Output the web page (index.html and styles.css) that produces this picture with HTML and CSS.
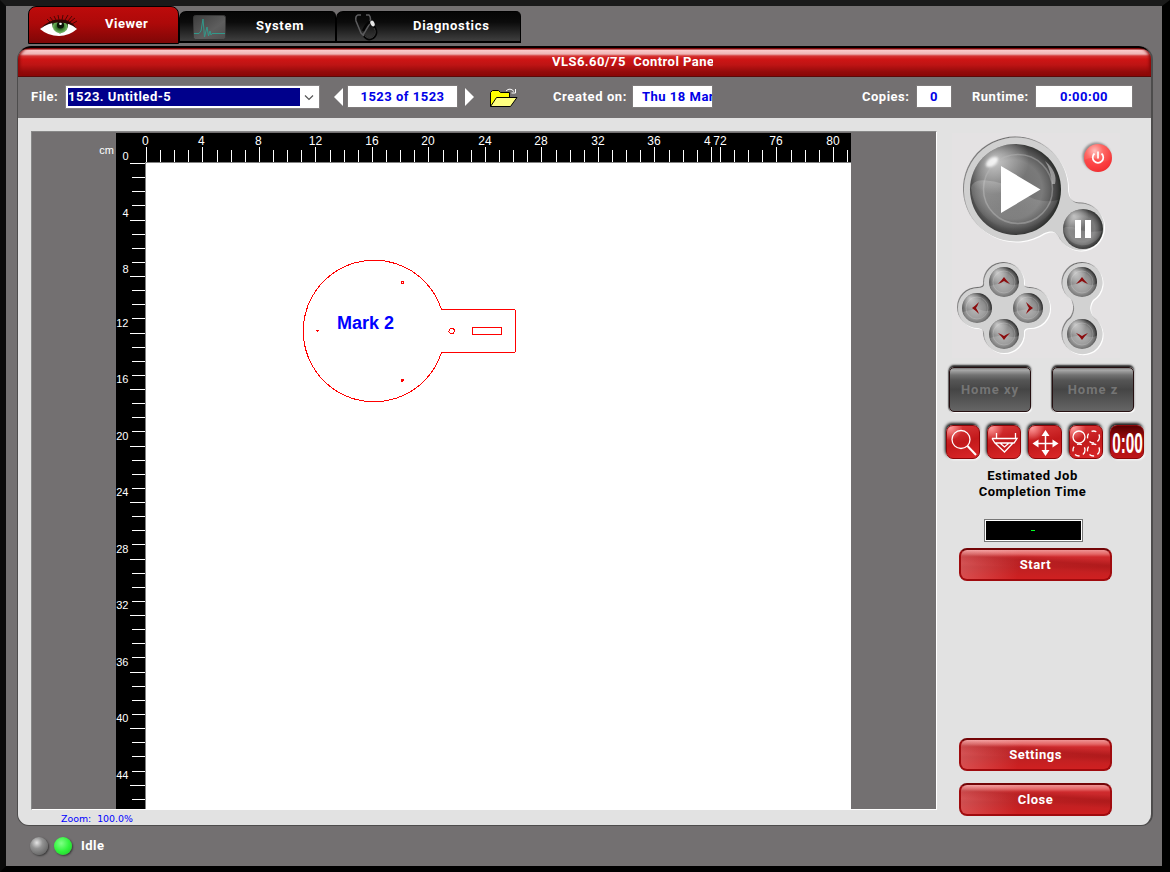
FILE: index.html
```html
<!DOCTYPE html>
<html lang="en">
<head>
<meta charset="utf-8">
<title>VLS6.60/75 Control Panel</title>
<link rel="stylesheet" href="styles.css">
</head>
<body>
<div class="window">
  <nav class="tabs">
    <div class="tab tab-active">
      <svg class="eye" width="38" height="26" viewBox="0 0 38 26">
        <defs><radialGradient id="iris"><stop offset="0" stop-color="#173a14"/><stop offset=".5" stop-color="#3f7d33"/><stop offset=".85" stop-color="#6db35a"/><stop offset="1" stop-color="#2c4d26"/></radialGradient></defs>
        <path d="M0 14 Q9 6 20 6 Q31 6 37 14 Q29 21 19 21 Q8 21 0 14Z" fill="#fff"/>
        <path d="M12 8Q20 3 28 8Q29 17 20 18.500Q12 17 12 8Z" fill="url(#iris)"/>
        <circle cx="20.500" cy="10" r="3.600" fill="#0a1608"/>
        <circle cx="20.500" cy="8.800" r="1.300" fill="#fff"/>
        <path d="M0 14 Q9 4 20 4.500 Q31 4 37 14 Q30 7.500 20 7.500 Q9 6.500 0 14Z" fill="#300504"/>
        <path d="M10 7L7 4M13 6L10 2M16 5L14 1M19 5L18 0M22 5L23 0M25 5L28 0M28 6L32 1M30 7L35 3M32 9L37 6" stroke="#4c0504" stroke-width="1"/>
      </svg>
      <span>Viewer</span>
    </div>
    <div class="tab tab-system">
      <svg width="33" height="25" viewBox="0 0 33 25">
        <defs><linearGradient id="scr" x2="1" y2="1"><stop stop-color="#3d3d3d"/><stop offset=".6" stop-color="#5e5e5e"/><stop offset="1" stop-color="#4d4d4d"/></linearGradient></defs>
        <rect x=".5" y=".5" width="32" height="24" rx="2" fill="url(#scr)" stroke="#383838"/>
        <path d="M1 18.500H6L8 16L10 4L11.500 22L14 12L15.500 21L17 16L18 20L19 18.500H32" fill="none" stroke="#32988a"/>
      </svg>
      <span>System</span>
    </div>
    <div class="tab tab-diag">
      <svg width="24" height="27" viewBox="0 0 24 27">
        <path d="M7 1H4Q1 2 2 7L7 19L10 22M12 1H15Q18 4 15 11L9 21" fill="none" stroke="#5c5c5e" stroke-width="1.500"/>
        <path d="M10 22Q14 27 19 24Q24 20 21 14L18 9M9 17Q13 8 17 8" fill="none" stroke="#050505" stroke-width="2.500"/>
        <path d="M11 22Q15 26 19 23Q23 19 20 14" fill="none" stroke="#555" stroke-width=".7"/>
        <ellipse cx="18.500" cy="9.500" rx="2" ry="3" fill="#e8e8e8" transform="rotate(-25 18.500 9.500)"/>
      </svg>
      <span>Diagnostics</span>
    </div>
  </nav>

  <main class="panel">
    <header class="titlebar"><div class="title">VLS6.60/75&nbsp; Control Panel</div></header>
    <div class="toolbar">
      <label class="lbl-file">File:</label>
      <div class="select"><span class="selected">1523. Untitled-5</span>
        <svg width="17" height="18" viewBox="0 0 17 18"><path d="M5 7.500L9 11.500L13 7.500" fill="none" stroke="#555" stroke-width="1.200"/></svg></div>
      <svg class="prev" width="9" height="18" viewBox="0 0 9 18"><path d="M9 0V18L0 9Z" fill="#fff"/></svg>
      <div class="field f-page">1523 of 1523</div>
      <svg class="next" width="9" height="18" viewBox="0 0 9 18"><path d="M0 0V18L9 9Z" fill="#fff"/></svg>
      <svg class="folder" width="28" height="20" viewBox="0 0 28 20">
        <path d="M.5 18.500V4.500L2.500 2.500H8.500L10.500 4.500H19.500V9.500" fill="#ff0" stroke="#000"/>
        <path d="M.5 18.500L6.500 9.500H27L20.500 18.500Z" fill="#ffff80" stroke="#000"/>
        <path d="M16 3Q20 -1 24 3.500M25.500 1V5H21.500" fill="none" stroke="#fff"/>
      </svg>
      <label class="lbl-created">Created on:</label>
      <div class="field f-date"><span>Thu 18 Mar 2021</span></div>
      <label class="lbl-copies">Copies:</label>
      <div class="field f-copies">0</div>
      <label class="lbl-runtime">Runtime:</label>
      <div class="field f-runtime">0:00:00</div>
    </div>

    <div class="body">
      <section class="work">
        <div class="viewport">
          <svg width="904" height="677" viewBox="32 132 904 677">
            <rect x="116" y="133" width="735" height="676" fill="#000"/>
            <rect x="145" y="162" width="706" height="647" fill="#808080"/>
            <rect x="146" y="163" width="705" height="646" fill="#fff"/>
            <g stroke="#fff" shape-rendering="crispEdges" fill="none">
              <path d="M146.500 147v15M202.500 147v15M259.500 147v15M315.500 147v15M372.500 147v15M428.500 147v15M485.500 147v15M541.500 147v15M598.500 147v15M654.500 147v15M711.500 147v15M720.500 147v15M776.500 147v15M833.500 147v15"/>
              <path d="M160.500 150v12M174.500 150v12M188.500 150v12M217.500 150v12M231.500 150v12M245.500 150v12M273.500 150v12M287.500 150v12M301.500 150v12M330.500 150v12M344.500 150v12M358.500 150v12M386.500 150v12M400.500 150v12M414.500 150v12M443.500 150v12M457.500 150v12M471.500 150v12M499.500 150v12M513.500 150v12M527.500 150v12M556.500 150v12M570.500 150v12M584.500 150v12M612.500 150v12M626.500 150v12M640.500 150v12M669.500 150v12M683.500 150v12M697.500 150v12M734.500 150v12M748.500 150v12M762.500 150v12M791.500 150v12M805.500 150v12M819.500 150v12M847.500 150v12"/>
              <path d="M130 163.500h15M130 220.500h15M130 276.500h15M130 333.500h15M130 389.500h15M130 446.500h15M130 502.500h15M130 559.500h15M130 615.500h15M130 672.500h15M130 728.500h15M130 785.500h15"/>
              <path d="M132 177.500h13M132 191.500h13M132 205.500h13M132 234.500h13M132 248.500h13M132 262.500h13M132 290.500h13M132 304.500h13M132 318.500h13M132 347.500h13M132 361.500h13M132 375.500h13M132 403.500h13M132 417.500h13M132 431.500h13M132 460.500h13M132 474.500h13M132 488.500h13M132 516.500h13M132 530.500h13M132 544.500h13M132 573.500h13M132 587.500h13M132 601.500h13M132 629.500h13M132 643.500h13M132 657.500h13M132 686.500h13M132 700.500h13M132 714.500h13M132 742.500h13M132 756.500h13M132 771.500h13M132 799.500h13"/>
            </g>
            <g class="scale-x">
              <text x="145.500" y="145">0</text><text x="201.500" y="145">4</text><text x="258.500" y="145">8</text><text x="315.500" y="145">12</text><text x="372" y="145">16</text><text x="428" y="145">20</text><text x="485" y="145">24</text><text x="541" y="145">28</text><text x="598" y="145">32</text><text x="654" y="145">36</text><text x="707.500" y="145">4</text><text x="720" y="145">72</text><text x="776" y="145">76</text><text x="833" y="145">80</text>
            </g>
            <g class="scale-y">
              <text x="128.500" y="160">0</text><text x="128.500" y="217">4</text><text x="128.500" y="273">8</text><text x="128.500" y="327">12</text><text x="128.500" y="383">16</text><text x="128.500" y="440">20</text><text x="128.500" y="496">24</text><text x="128.500" y="553">28</text><text x="128.500" y="609">32</text><text x="128.500" y="666">36</text><text x="128.500" y="722">40</text><text x="128.500" y="779">44</text>
              <text x="114" y="154">cm</text>
            </g>
            <g fill="none" stroke="#f00" shape-rendering="crispEdges">
              <path d="M441.500 309.500A70.800 70.800 0 1 0 441.500 352.500H514.500L515.500 351.500V310.500L514.500 309.500Z"/>
              <rect x="472.500" y="327.500" width="29" height="7"/>
              <path d="M450.500 328.500H453.500L454.500 330.500L453.500 333.500H450.500L448.500 331.500Z"/>
              <rect x="401.500" y="281.500" width="2" height="2"/>
              <path d="M316.500 330.500H318.500L317.500 331.500Z"/>
              <path d="M401 379.500H404M401 380.500H404M401 381.500H403"/>
            </g>
            <text class="mark" x="337" y="329">Mark 2</text>
          </svg>
        </div>
        <div class="zoom">Zoom:&nbsp; 100.0%</div>
      </section>

      <aside class="side">
        <svg class="pad" width="200" height="235" viewBox="940 125 200 235">
          <defs>
            <radialGradient id="ball" cx=".47" cy=".5" r=".54"><stop offset="0" stop-color="#6e6e6e"/><stop offset=".6" stop-color="#7a7a7a"/><stop offset=".75" stop-color="#626262"/><stop offset=".9" stop-color="#404040"/><stop offset="1" stop-color="#202420"/></radialGradient>
            <radialGradient id="shine" cx=".27" cy=".17" r=".38"><stop stop-color="#fff" stop-opacity=".6"/><stop offset="1" stop-color="#fff" stop-opacity="0"/></radialGradient>
            <linearGradient id="gloss" x2="0" y2="1"><stop stop-color="#fff" stop-opacity=".2"/><stop offset="1" stop-color="#fff" stop-opacity="0"/></linearGradient>
            <radialGradient id="small" cx=".46" cy=".52" r=".54"><stop stop-color="#adadad"/><stop offset=".6" stop-color="#8c8c8c"/><stop offset=".85" stop-color="#5c5c5c"/><stop offset="1" stop-color="#2a2a2a"/></radialGradient>
            <radialGradient id="redball" cx=".38" cy=".25" r=".75"><stop stop-color="#ffc0bd"/><stop offset=".4" stop-color="#ff6965"/><stop offset="1" stop-color="#f22f32"/></radialGradient>
            <filter id="bevel" x="-10%" y="-10%" width="120%" height="120%">
              <feDropShadow dx="-.7" dy="-.9" stdDeviation=".35" flood-color="#4c4c4c" flood-opacity=".85"/>
              <feDropShadow dx="1" dy="1" stdDeviation=".4" flood-color="#fff"/>
            </filter>
            <filter id="soft" x="-30%" y="-30%" width="160%" height="160%"><feGaussianBlur stdDeviation="1.300"/></filter>
            <g id="knob"><circle r="15" fill="url(#small)"/><path d="M-12 9A15 15 0 0 0 15 2Q8 4 4 2T-14 4Z" fill="#ddd" opacity=".22"/><circle r="11" fill="none" stroke="#ddd" opacity=".25"/><circle r="15" fill="url(#shine)"/></g>
            <path id="chev" d="M-6 3Q-2 -1 0 -4Q2 -1 6 3Q2 1.500 0 0Q-2 1.500 -6 3Z" fill="#8b0b0d"/>
          </defs>
          <rect x="952" y="133" width="168" height="225" fill="#e4e2e3"/>
          <path d="M1016 137.500A52 52 0 0 1 1068 189.500C1068 196 1071 203 1079 203.500A23.500 23.500 0 1 1 1061 240C1056 231 1052 230 1044 233.300A52 52 0 1 1 1016 137.500Z" fill="#d0d0d0" filter="url(#bevel)"/>
          <path d="M984 283A20 20 0 1 1 1024 283Q1023 288 1030 288A20 20 0 1 1 1030 328Q1023 328 1024 333A20 20 0 1 1 984 333Q984 329 978 328A20 20 0 1 1 978 288Q985 288 984 283Z" fill="#d2d2d2" filter="url(#bevel)"/>
          <path d="M1072 300A20 20 0 1 1 1093 300C1089 306 1089 312 1094 318A20 20 0 1 1 1071 318C1075 312 1075 306 1072 300Z" fill="#d2d2d2" filter="url(#bevel)"/>
          <circle cx="1015.500" cy="189.500" r="45.500" fill="url(#ball)"/>
          <circle cx="1015.500" cy="189.500" r="45.500" fill="url(#shine)"/>
          <circle cx="1018" cy="189" r="34.500" fill="none" stroke="#b9b9b9" stroke-width="1.500" opacity=".45"/>
          <path d="M971 188Q973 178 990 181C1018 184 1030 207 1058 200A45 45 0 0 1 971 188Z" fill="url(#gloss)"/>
          <ellipse cx="992" cy="162" rx="7" ry="4" fill="#fff" opacity=".8" transform="rotate(-35 992 162)" filter="url(#soft)"/>
          <path d="M1045 161Q1058 172 1055 184L1052 184Q1051 170 1045 161Z" fill="#ccc" opacity=".6"/>
          <path d="M1001 166V213L1040.500 189.500Z" fill="#fff"/>
          <circle cx="1083" cy="229" r="20" fill="url(#ball)"/><circle cx="1083" cy="229" r="20" fill="url(#shine)"/>
          <path d="M1063 228Q1070 225 1078 229T1102 231A20 20 0 0 1 1063 228Z" fill="#fff" opacity=".13"/>
          <path d="M1075 220h6v18h-6ZM1085 220h6v18h-6Z" fill="#fff"/>
          <circle cx="1096.500" cy="156.500" r="14" fill="#555" opacity=".6" filter="url(#soft)"/>
          <circle cx="1098" cy="158" r="14" fill="url(#redball)"/>
          <path d="M1084.500 160Q1092 156 1098 160T1111.500 159A14 14 0 0 1 1084.500 160Z" fill="#ff3236" opacity=".4"/>
          <path d="M1094.500 153.500A5.300 5.300 0 1 0 1101.500 153.500M1098 151.500V158.500" fill="none" stroke="#fff" stroke-width="1.700"/>
          <use href="#knob" x="1004" y="282"/><use href="#knob" x="977" y="308"/><use href="#knob" x="1028" y="308"/><use href="#knob" x="1004" y="334"/><use href="#knob" x="1082" y="282"/><use href="#knob" x="1082" y="334"/>
          <use href="#chev" x="1004" y="281"/><use href="#chev" x="1082" y="281"/>
          <use href="#chev" transform="translate(1004 336) rotate(180)"/><use href="#chev" transform="translate(1082 336) rotate(180)"/>
          <use href="#chev" transform="translate(976 308) rotate(-90)"/><use href="#chev" transform="translate(1029 308) rotate(90)"/>
        </svg>
        <div class="homes"><button class="home">Home xy</button><button class="home">Home z</button></div>
        <div class="tools">
          <div class="tool"><svg viewBox="0 0 34 34"><circle cx="15" cy="14.500" r="9"/><path d="M21.500 21L30 30" stroke-width="2"/></svg></div>
          <div class="tool"><svg viewBox="0 0 34 34"><path d="M9.500 8V13M28.500 8V13M5 13.500H30L27 18H8L5 13.500M8 18L17.500 27L26 18M13.500 18.500L17.500 22L21.500 18.500"/></svg></div>
          <div class="tool"><svg viewBox="0 0 34 34"><path d="M17.500 9V28M8 18.500H27" stroke-width="1.500"/><path class="solid" d="M17.500 5L21.500 11H13.500ZM17.500 31L21.500 25H13.500ZM4.500 18.500L10.500 14.500V22.500ZM30.500 18.500L24.500 14.500V22.500Z"/></svg></div>
          <div class="tool"><svg viewBox="0 0 34 34"><circle cx="10" cy="12" r="6"/><g stroke-dasharray="5 3.500"><circle cx="24.500" cy="12" r="6"/><circle cx="10" cy="25" r="6"/><circle cx="24.500" cy="25" r="6"/></g></svg></div>
          <div class="tool tool-time"><svg viewBox="0 0 34 34"><text transform="translate(17.500 28) scale(.53 1)" text-anchor="middle">0:00</text></svg></div>
        </div>
        <div class="estimate">Estimated Job<br>Completion Time</div>
        <div class="display"><i></i></div>
        <button class="red start">Start</button>
        <button class="red settings">Settings</button>
        <button class="red close">Close</button>
      </aside>
    </div>
  </main>
  <footer class="status"><i class="led"></i><i class="led led-on"></i><span>Idle</span></footer>
</div>
</body>
</html>
```
FILE: styles.css
```css
* { box-sizing: border-box; }
body { margin: 0; font: 700 13px/16px Roboto, "Liberation Sans", sans-serif; letter-spacing: .5px; color: #fff; }
svg { display: block; flex: none; }
button { font: inherit; letter-spacing: inherit; color: #fff; padding: 0; border: 0; display: block; }
.window { width: 1170px; height: 872px; background: #737071; border-style: solid; border-width: 6px 8px 6px 6px; border-color: #1a1a1a #000 #000 #0a0a0a; overflow: hidden; }

.tabs { height: 40px; display: flex; align-items: flex-start; padding-left: 22px; }
.tab { height: 32px; margin-top: 5px; display: flex; align-items: flex-start; background: linear-gradient(#050505, #0b0b0b 35%, #3b3b3b 95%); border: 1px solid #000; border-bottom-width: 2px; border-radius: 7px 5px 0 0; }
.tab span { display: block; padding-top: 6px; white-space: nowrap; }
.tab-active { width: 151px; height: 38px; margin-top: 0; background: linear-gradient(#bd0b0b, #ad0909 45%, #7f0707); border-radius: 8px 8px 0 0; border-bottom-width: 1px; }
.tab-active span { margin-left: 27px; padding-top: 9px; }
.eye { margin: 8px 0 0 11px; }
.tab-system { width: 157px; }
.tab-system svg { margin: 3px 30px 0 13px; }
.tab-system span { letter-spacing: .7px; }
.tab-diag { width: 185px; }
.tab-diag svg { margin: 2px 35px 0 17px; }
.tab-diag span { letter-spacing: .7px; }

.panel { width: 1136px; height: 780px; margin-left: 11px; display: flex; flex-direction: column; border: solid #4d4c4c; border-width: 0 2px 1px 1px; border-radius: 14px 14px 12px 12px; background: #737071; overflow: hidden; }
.titlebar { height: 31px; flex: none; border-top: 2px solid #050000; border-bottom: 1px solid #5c0808; border-radius: 12px 12px 0 0; background: linear-gradient(#750606, #8b0808 1px, #fbcaca 2px, #eeb4b4 6px, #d43434 8px, #cf1515 11px, #bd1414 17px, #930a0a 24px, #8b0707); box-shadow: inset 3px 0 3px -1px #8c0909, inset -3px 0 3px -1px #8c0909; }
.title { width: 161px; margin-left: 534px; padding-top: 6px; overflow: hidden; white-space: pre; letter-spacing: .45px; }
.toolbar { height: 41px; flex: none; display: flex; align-items: flex-start; padding-top: 9px; white-space: nowrap; }
.toolbar label { padding-top: 3px; }
.lbl-file { width: 35px; margin-left: 13px; }
.select { width: 253px; height: 22px; display: flex; padding: 1px; background: #fff; border: 1px solid #fff; box-shadow: 0 0 0 1px #858283; }
.selected { width: 232px; height: 18px; background: #00008b; padding: 1px 0 0; }
.prev { margin: 2px 0 0 15px; }
.next { margin: 2px 0 0 8px; }
.field { height: 21px; background: #fff; color: #0000e6; text-align: center; padding-top: 3px; box-shadow: 0 0 0 1px #7d7a7a; overflow: hidden; }
.f-page { width: 109px; margin-left: 5px; }
.folder { margin: 2px 0 0 16px; }
.lbl-created { width: 80px; margin-left: 35px; letter-spacing: .6px; }
.f-date { width: 79px; text-align: left; padding-left: 9px; }
.lbl-copies { width: 55px; margin-left: 150px; }
.f-copies { width: 34px; }
.lbl-runtime { width: 64px; margin-left: 21px; }
.f-runtime { width: 96px; }

.body { flex: 1; display: flex; background: #e2e2e2; }
.work { width: 919px; padding: 13px 0 0 13px; }
.viewport { width: 906px; height: 679px; background: #737071; border: 1px solid; border-color: #888 #fff #fff #888; }
.scale-x { font: 400 12px "Liberation Sans", sans-serif; letter-spacing: .1px; fill: #fff; text-anchor: middle; }
.scale-y { font: 400 11px "Liberation Sans", sans-serif; letter-spacing: 0; fill: #fff; text-anchor: end; }
.mark { font: 700 18px "Liberation Sans", sans-serif; letter-spacing: 0; fill: #00f; }
.zoom { font: 400 9.400px/14px "DejaVu Sans", sans-serif; letter-spacing: 0; color: #00f; padding: 2px 0 0 30px; }

.side { width: 214px; padding: 7px 0 0 3px; }
.homes { display: flex; gap: 21px; margin: 7px 0 0 9px; }
.home { width: 82px; height: 45px; color: #757575; letter-spacing: 1px; border: 1px solid #261011; border-radius: 5px; background: linear-gradient(#777, #aaa 2px, #727272 7px, #565656 12px, #454545 50%, #656565); box-shadow: 0 -2px 2px #252525, 1px 1px 1px #fff, -1px 0 1px #777; }
.tools { display: flex; gap: 7px; margin: 13px 0 0 6px; }
.tool { width: 34px; height: 34px; border: 1px solid #8d0508; border-radius: 7px; background: radial-gradient(circle at 10% 5%, #ff9c9c 0, transparent 30%), linear-gradient(165deg, #db3b3c, #c2191b 50%, #dc2829); box-shadow: -1px -2px 3px #151515, 1px 1px 2px #fff; }
.tool svg { width: 34px; height: 34px; margin: -1px; fill: none; stroke: #fff; stroke-width: 1.300; }
.tool .solid { fill: #fff; stroke: none; }
.tool-time { background: linear-gradient(#570002, #a50b0e 45%, #bd1618); }
.tool text { font: 700 29px "Liberation Sans", sans-serif; letter-spacing: 0; fill: #fff; stroke: none; }
.estimate { color: #000; text-align: center; width: 185px; margin: 9px 0 0; }
.display { width: 99px; height: 23px; margin: 19px 0 0 44px; background: #000; border: 1px solid #777; box-shadow: inset 0 0 0 1px #fff; padding: 10px 46px; }
.display i { display: block; width: 4px; height: 1px; background: #0f2; }
.red { width: 153px; height: 33px; margin-left: 19px; border: solid #a00b0e; border-width: 2px; border-top-color: #730507; border-radius: 8px; background: linear-gradient(4deg, transparent 40%, rgba(120,0,0,.22) 60%, transparent 75%), linear-gradient(100deg, rgba(255,210,210,.28), transparent 40%), linear-gradient(#ef9494, #e56767 4px, #cf2b2e 7px, #bd2022 17px, #cf2021); }
.start { margin-top: 6px; }
.settings { margin-top: 157px; }
.close { margin-top: 12px; }

.status { display: flex; align-items: center; height: 40px; padding-left: 24px; }
.led { width: 18px; height: 18px; border-radius: 50%; margin: -1px 6px 0 0; background: radial-gradient(circle at 38% 32%, #e4e4e4, #929292 35%, #696969 75%, #444); box-shadow: 1px 1px 2px #373737; }
.led-on { background: radial-gradient(circle at 40% 35%, #80ff86, #30f43c 50%, #20ca2b 90%); }
.status span { margin-left: 3px; }
```
